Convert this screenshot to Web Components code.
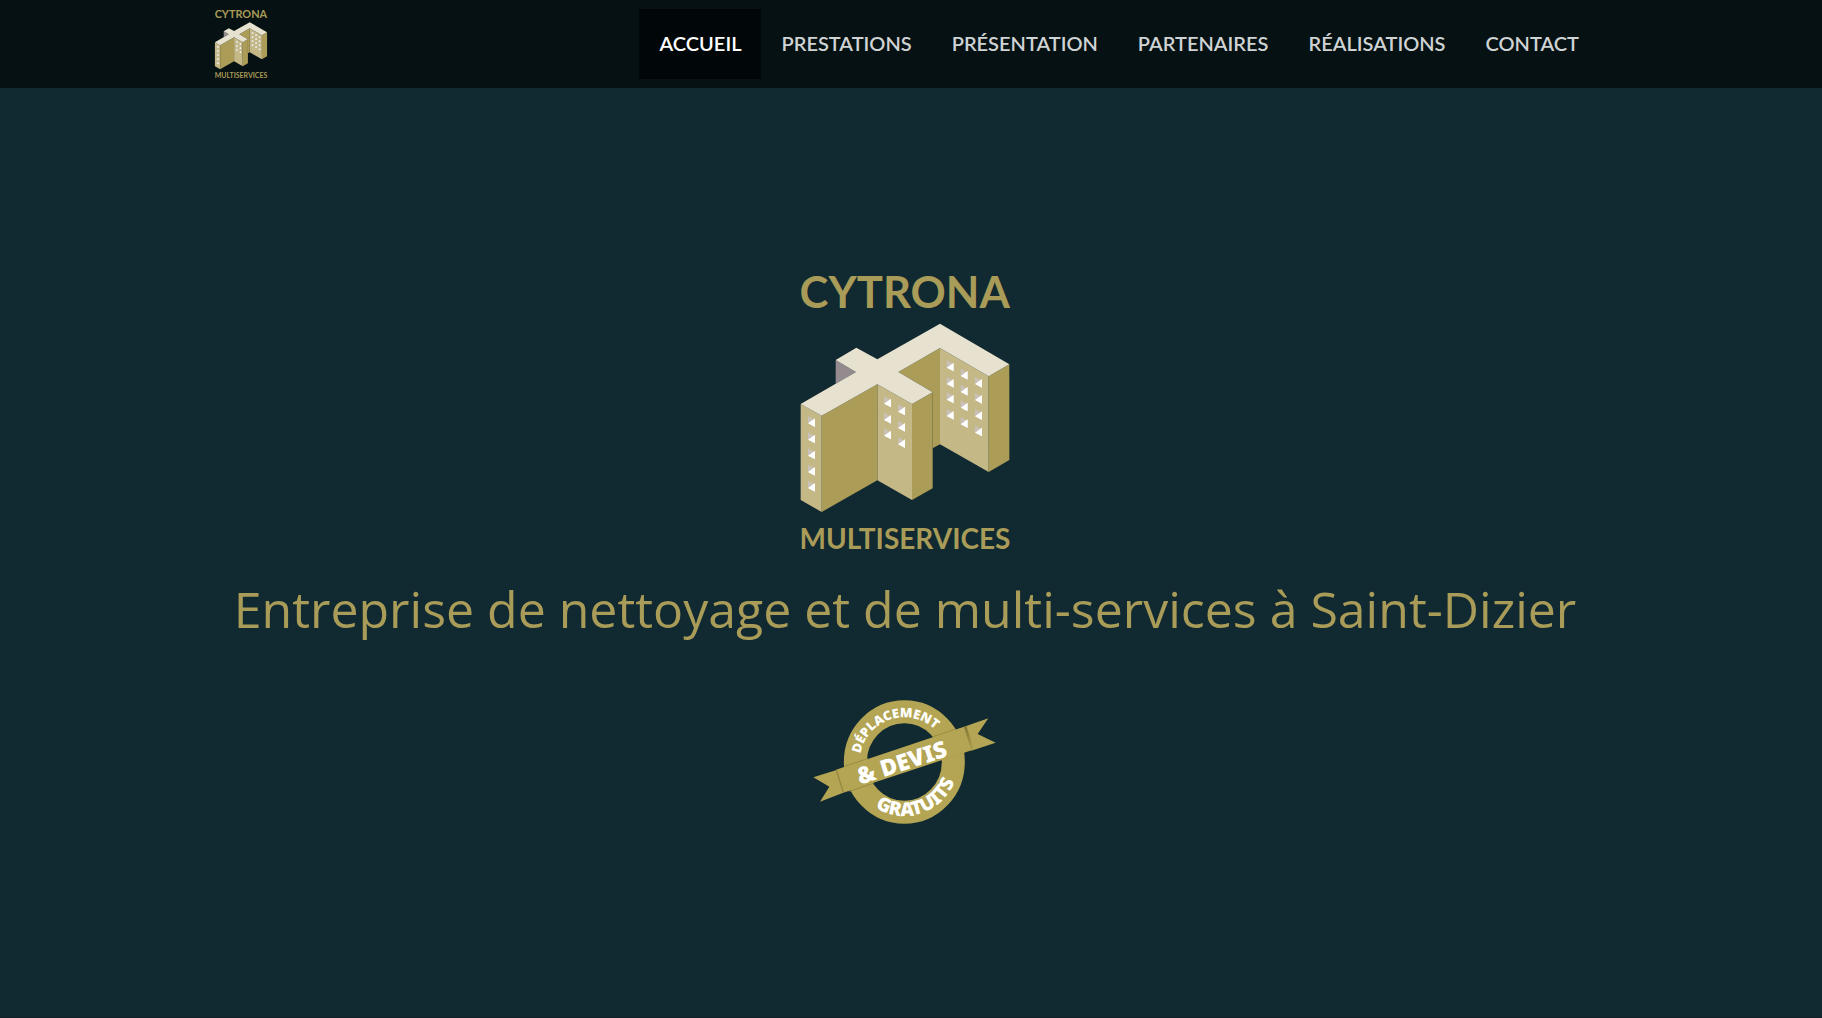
<!DOCTYPE html>
<html lang="fr">
<head>
    <meta charset="utf-8">
    <meta name="viewport" content="width=device-width, initial-scale=1">
    <title>Cytrona Multiservices</title>
    <style>
        body {
            margin: 0;
            min-height: 100vh;
            display: flex;
            flex-direction: column;
            background: #112930;
            font-family: Lato, "Liberation Sans", sans-serif;
            --or: #a99b58;
        }
    </style>
</head>
<body>
    <mi-header>
        <mi-logo slot="logo"></mi-logo>
        <mi-enlace href="#accueil" activo>Accueil</mi-enlace>
        <mi-enlace href="#prestations">Prestations</mi-enlace>
        <mi-enlace href="#presentation">Présentation</mi-enlace>
        <mi-enlace href="#partenaires">Partenaires</mi-enlace>
        <mi-enlace href="#realisations">Réalisations</mi-enlace>
        <mi-enlace href="#contact">Contact</mi-enlace>
    </mi-header>
    <mi-hero>
        <mi-logo slot="logo"></mi-logo>
        Entreprise de nettoyage et de multi-services à Saint-Dizier
        <mi-badge slot="badge"></mi-badge>
    </mi-hero>

    <script>
        class MiLogo extends HTMLElement {
            constructor() {
                super();
                this.attachShadow({ mode: 'open' });
            }

            connectedCallback() {
                // left edge and middle height of each window
                const ventanas = [
                    [84, [485, 534, 582, 631, 679]],
                    [312, [426, 475, 522]],
                    [354, [450, 499, 548]],
                    [500, [318, 367, 414, 463]],
                    [542, [343, 391, 438, 488]],
                    [585, [367, 415, 464, 513]]
                ];
                const dibujo = ventanas.map(([x, ys]) => ys.map(y => `
                    <path fill="#c9c1b8" d="M${x} ${y - 17}l21 12v21l-21-11z"/>
                    <path fill="#fff" d="M${x} ${y + 5}l21-15v26z"/>`).join('')).join('');

                this.shadowRoot.innerHTML = `
                <style>
                    :host {
                        display: block;
                        width: 240px;
                    }
                    svg {
                        display: block;
                        width: 100%;
                        overflow: visible;
                    }
                    text {
                        font-family: Lato, sans-serif;
                        font-weight: 700;
                        text-anchor: middle;
                        fill: var(--or);
                    }
                </style>
                <svg viewBox="15 33 720 840">
                    <text x="374" y="144" font-size="131">CYTRONA</text>
                    <path fill="#948b8f" d="M167 300l61 36-61 35z"/>
                    <path fill="#ab9c57" d="M355 336l125-72v289l-22 12V397z"/>
                    <path fill="#c3b886" d="M480 264l146 85v287l-146-83z"/>
                    <path fill="#ab9c57" d="M626 349l62-36v287l-62 36z"/>
                    <path fill="#c3b886" d="M292 373l104 59v288l-104-59z"/>
                    <path fill="#ab9c57" d="M396 432l62-35v288l-62 35z"/>
                    <path fill="#ab9c57" d="M125 467l167-94v288l-167 95z"/>
                    <path fill="#c3b886" d="M62 432l63 35v289l-63-36z"/>
                    <path fill="#e6e2cf" d="M62 432l166-96-61-36 62-37 63 35 188-107 208 122-62 36-146-85-125 72 103 61-62 35-104-59-167 94z"/>
                    ${dibujo}
                    <text x="375" y="866" font-size="84">MULTISERVICES</text>
                </svg>
                `;
            }
        }
        customElements.define('mi-logo', MiLogo);

        class MiBadge extends HTMLElement {
            constructor() {
                super();
                this.attachShadow({ mode: 'open' });
            }

            connectedCallback() {
                this.shadowRoot.innerHTML = `
                <style>
                    :host {
                        display: block;
                        width: 210px;
                    }
                    svg {
                        display: block;
                        width: 100%;
                        overflow: visible;
                    }
                    text {
                        font-family: "Noto Sans", sans-serif;
                        font-weight: 900;
                        text-anchor: middle;
                        fill: #fff;
                    }
                </style>
                <svg viewBox="0 0 630 435">
                    <defs>
                        <path id="arriba" d="M179 216a134 134 0 0 1 268 0"/>
                        <path id="abajo" d="M151 216a162 162 0 0 0 324 0"/>
                        <linearGradient id="pliegue">
                            <stop offset="0" stop-color="#7d7030"/>
                            <stop offset="1" stop-color="#b3a553"/>
                        </linearGradient>
                    </defs>
                    <ellipse cx="313" cy="216" rx="147" ry="151" fill="none" stroke="#b3a553" stroke-width="69"/>
                    <path fill="#b3a553" d="M40 262l72-23 18 69-70 27 28-45z"/>
                    <path fill="#b3a553" d="M492 110l73-25-32 47 54 26-73 24z"/>
                    <path fill="none" stroke="#938640" stroke-width="3" d="M147 304l75-25M424 209l72-24M134 229l70-23M400 140l66-22"/>
                    <path fill="#b3a553" d="M108 239l384-129 23 71-385 127z"/>
                    <path fill="url(#pliegue)" d="M493 110l7-2 22 71-7 2z"/>
                    <path fill="none" stroke="#968842" stroke-width="4" d="M109 240l21 67"/>
                    <text font-size="39"><textPath href="#arriba" startOffset="40%">DÉPLACEMENT</textPath></text>
                    <text font-size="69" transform="translate(313 241) rotate(-18)">&amp; DEVIS</text>
                    <text font-size="57"><textPath href="#abajo" startOffset="60%">GRATUITS</textPath></text>
                </svg>
                `;
            }
        }
        customElements.define('mi-badge', MiBadge);

        class MiEnlace extends HTMLElement {
            constructor() {
                super();
                this.attachShadow({ mode: 'open' });
            }

            connectedCallback() {
                this.shadowRoot.innerHTML = `
                <style>
                    :host {
                        display: block;
                    }
                    a {
                        display: block;
                        padding: 0 20px 2px;
                        font-size: 20px;
                        font-weight: 600;
                        line-height: 68px;
                        text-transform: uppercase;
                        text-decoration: none;
                        white-space: nowrap;
                        color: #cfd3d4;
                    }
                    a:hover,
                    :host([activo]) a {
                        background: #010709;
                        color: #fff;
                    }
                </style>
                <a href="${this.getAttribute('href')}"><slot></slot></a>
                `;
            }
        }
        customElements.define('mi-enlace', MiEnlace);

        class MiHeader extends HTMLElement {
            constructor() {
                super();
                this.attachShadow({ mode: 'open' });
            }

            connectedCallback() {
                this.shadowRoot.innerHTML = `
                <style>
                    :host {
                        display: block;
                        background: #051112;
                    }
                    header {
                        display: flex;
                        align-items: center;
                        justify-content: space-between;
                        max-width: 1388px;
                        margin: 0 auto;
                        padding: 9px 12px 9px 0;
                    }
                    nav {
                        display: flex;
                    }
                    ::slotted(mi-logo) {
                        width: 60px;
                    }
                </style>
                <header>
                    <slot name="logo"></slot>
                    <nav><slot></slot></nav>
                </header>
                `;
            }
        }
        customElements.define('mi-header', MiHeader);

        class MiHero extends HTMLElement {
            constructor() {
                super();
                this.attachShadow({ mode: 'open' });
            }

            connectedCallback() {
                this.shadowRoot.innerHTML = `
                <style>
                    :host {
                        flex: 1;
                        display: flex;
                        flex-direction: column;
                        align-items: center;
                        justify-content: center;
                        padding-right: 12px;
                        box-shadow: inset 0 -1px #0d2127;
                    }
                    h1 {
                        margin: 23px 0 46px;
                        font-family: "Open Sans", sans-serif;
                        font-size: 50px;
                        font-weight: 400;
                        line-height: 70px;
                        text-align: center;
                        color: var(--or);
                    }
                </style>
                <slot name="logo"></slot>
                <h1><slot></slot></h1>
                <slot name="badge"></slot>
                `;
            }
        }
        customElements.define('mi-hero', MiHero);
    </script>
</body>
</html>
